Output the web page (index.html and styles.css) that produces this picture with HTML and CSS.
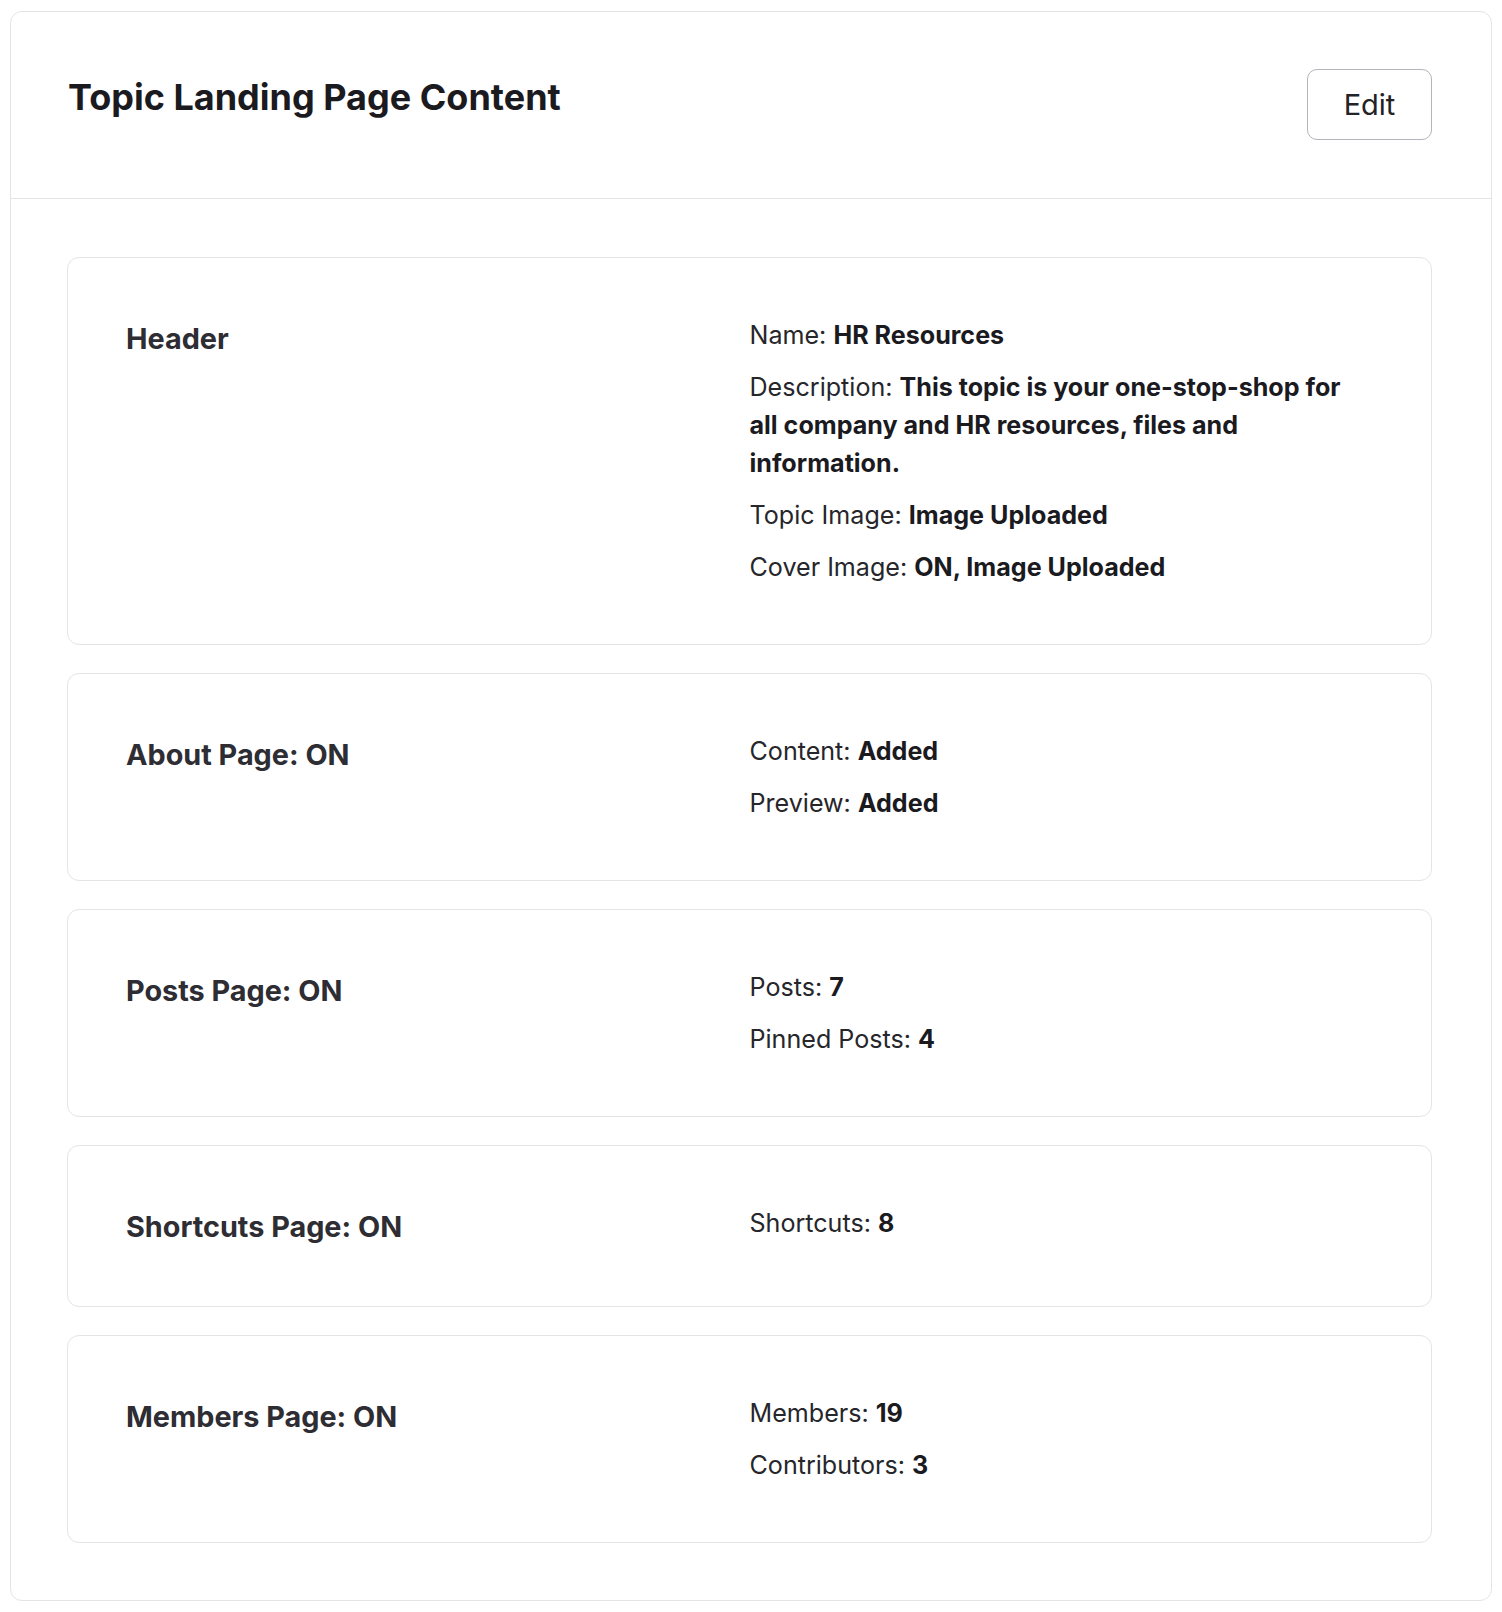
FILE: index.html
```html
<!DOCTYPE html>
<html>
<head>
   <meta charset="utf-8">
   <title>Topic Landing Page Content</title>
   <link rel="stylesheet" href="styles.css">
</head>
<body>
<div class="panel">
   <div class="panel-hd">
      <h1>Topic Landing Page Content</h1>
      <button class="btn-edit" type="button">Edit</button>
   </div>
   <div class="panel-bd">

      <div class="section">
         <h2>Header</h2>
         <div class="details">
            <p>Name: <b>HR Resources</b></p>
            <p>Description: <b>This topic is your one-stop-shop for all company and HR resources, files and information.</b></p>
            <p>Topic Image: <b>Image Uploaded</b></p>
            <p>Cover Image: <b>ON, Image Uploaded</b></p>
         </div>
      </div>

      <div class="section">
         <h2>About Page: ON</h2>
         <div class="details">
            <p>Content: <b>Added</b></p>
            <p>Preview: <b>Added</b></p>
         </div>
      </div>

      <div class="section">
         <h2>Posts Page: ON</h2>
         <div class="details">
            <p>Posts: <b>7</b></p>
            <p>Pinned Posts: <b>4</b></p>
         </div>
      </div>

      <div class="section">
         <h2>Shortcuts Page: ON</h2>
         <div class="details">
            <p>Shortcuts: <b>8</b></p>
         </div>
      </div>

      <div class="section">
         <h2>Members Page: ON</h2>
         <div class="details">
            <p>Members: <b>19</b></p>
            <p>Contributors: <b>3</b></p>
         </div>
      </div>

   </div>
</div>
</body>
</html>
```

FILE: styles.css
```css
body {
      margin: 0;
      padding: 11px 10px;
      font-family: Inter, "Noto Sans", Arial, sans-serif;
      color: #1f1f24;
      background: #fff;
    }

.panel {
      border: 1px solid #e4e4e7;
      border-radius: 12px;
      background: #fff;
}

.panel-hd {
      display: flex;
      justify-content: space-between;
      align-items: flex-start;
      padding: 57px 59px 58px 57px;
      border-bottom: 1px solid #e4e4e7;
}

.panel-hd h1 {
      margin: 0;
      font-size: 36px;
      line-height: 56px;
      font-weight: 700;
      color: #1a1a1f;
}

.btn-edit {
      width: 125px;
      height: 71px;
      border: 1px solid #b4b4bb;
      border-radius: 10px;
      background: #fff;
      font-family: inherit;
      font-size: 29px;
      color: #222227;
}

.panel-bd {
      padding: 58px 59px 57px 56px;
      display: flex;
      flex-direction: column;
      gap: 28px;
}

.section {
      display: grid;
      grid-template-columns: 1fr 1fr;
      padding: 58px;
      border: 1px solid #e4e4e7;
      border-radius: 12px;
}

.section h2 {
      margin: 0;
      padding-top: 2px;
      font-size: 28.8px;
      line-height: 42px;
      font-weight: 700;
      color: #2d2d33;
}

.details p {
      margin: 0 0 14px 0;
      font-size: 25.1px;
      line-height: 38px;
      color: #26262b;
}

.details p:last-child {
      margin-bottom: 0;
}

.details b {
      font-weight: 700;
      color: #1a1a1f;
}
```
